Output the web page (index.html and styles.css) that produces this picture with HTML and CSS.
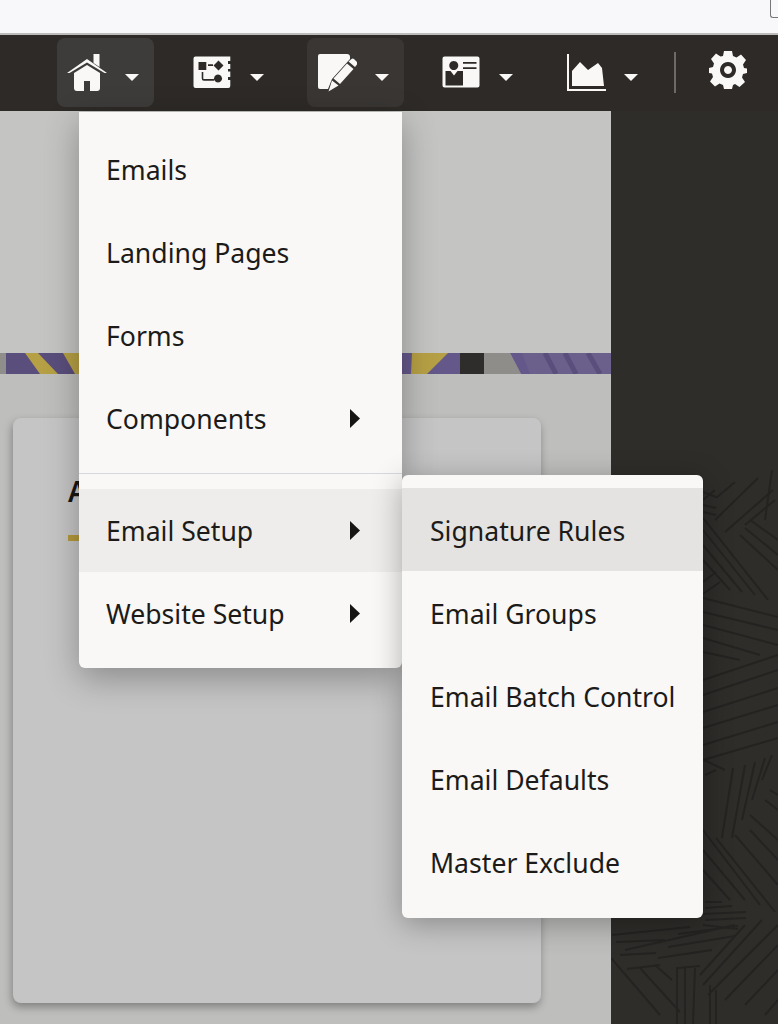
FILE: index.html
```html
<!DOCTYPE html>
<html lang="en">
<head>
  <meta charset="UTF-8" />
  <meta name="viewport" content="width=device-width, initial-scale=1.0"/>
  <title>Assets menu</title>
  <link rel="stylesheet" href="styles.css">
</head>
<body>
  <!-- Browser strip -->
  <div class="top-strip"><span class="strip-box"></span></div>

  <!-- Nav bar -->
  <nav class="navbar">
    <a class="nav-item active">
      <svg class="nav-icon" viewBox="0 0 40 40">
        <path d="M26.500 1h6v13l-6-4z" />
        <path d="M20 6 0 20h2.500L20 9.500 37.500 20H40z" />
        <path d="M20 12 7 20v15q0 3 3 3h7V28h6v10h7q3 0 3-3V20z" />
      </svg>
      <span class="caret"></span>
    </a>
    <a class="nav-item">
      <svg class="nav-icon" viewBox="0 0 40 40">
        <path fill-rule="evenodd" d="M3.500 3.500H38.300V8H36V11h2.300V16H36V18.500h2.300V24H36V27h2.300V33q0 2-2 2H3.500q-2 0-2-2V5.500q0-2 2-2zM6.500 9v8h7.800V9zM16 11.200v1.700h5v-1.700zM26.500 7.500l-5 5 5 5 5-5zM9.700 19v6.500q0 2.300 2.300 2.300H22v-1.700H12q-.7 0-.7-.7V19zM26 21.500a4 4 0 1 0 .01 0z" />
      </svg>
      <span class="caret"></span>
    </a>
    <a class="nav-item active dim">
      <svg class="nav-icon" viewBox="0 0 40 40">
        <path d="M3 1h27q3 0 3 3v2L15 26l-4 10H3q-2 0-2-2V3q0-2 2-2z" />
        <path d="M31.500 8.500 38 14l2-2.500q1-1.500 0-2.500l-3-3q-1.500-1-2.500 0zM30 10.500 16.500 25.500l6.500 5.500L36.500 16zM15 27.500l-3.500 11 10-6z" />
      </svg>
      <span class="caret"></span>
    </a>
    <a class="nav-item">
      <svg class="nav-icon" viewBox="0 0 40 40">
        <path fill-rule="evenodd" d="M3.500 3.500h33q2 0 2 2V32.500q0 2-2 2h-33q-2 0-2-2V5.500q0-2 2-2zM12.750 8a4.500 4.500 0 1 0 .01 0zM22 9v1.800h13.500V9zM22 14.300v1.800h13.500v-1.800zM4.500 18V32.500H22V18h-5.500l-3.500 4.500L9.500 18z" />
      </svg>
      <span class="caret"></span>
    </a>
    <a class="nav-item">
      <svg class="nav-icon" viewBox="0 0 40 40">
        <path d="M1 1h2v35h37v2H1z" />
        <path d="M6 33V18l8-9 8 8 10-7 4 5 2 18z" />
      </svg>
      <span class="caret"></span>
    </a>
    <span class="nav-divider"></span>
    <svg class="gear" viewBox="0 0 38 38">
      <path fill-rule="evenodd" d="M15 0h8l1 5 3.500 1.500 4.500-3 5 5.500-3 4.500L35 17l3 .5V22l-4 1-1 3.500 3 4.500-5.500 5-4.500-3L24 34l-1 4h-8l-1-4-3.500-1.500-4.500 3-5-5 3-4.500L3 22.500 0 22v-5l4-1 1-3.500-3-4.500 5-5.500 4.500 3L14 5zM19 11a8 8 0 1 0 .01 0zM19 15a4 4 0 1 1-.01 0z" />
    </svg>
  </nav>

  <!-- Page behind the menu -->
  <div class="page">
    <main class="content">
      <div class="hero"></div>
      <svg class="stripe" viewBox="0 0 611 21" preserveAspectRatio="none">
        <rect width="460" height="21" fill="#5a4e7c" />
        <rect x="521" width="90" height="21" fill="#6b5f8b" />
        <rect x="402" width="58" height="21" fill="#64588a" />
        <rect width="6" height="21" fill="#8f8e8a" />
        <polygon points="25,0 38,0 58,21 40,21" fill="#b6a045" />
        <polygon points="63,0 80,0 80,21 75,21" fill="#b6a045" />
        <polygon points="411,21 412,0 448,0 427,21" fill="#b6a045" />
        <rect x="460" width="24" height="21" fill="#2e2d2c" />
        <polygon points="484,0 510,0 521,21 484,21" fill="#8e8d8a" />
        <polygon points="484,0 522,0 530,21 521,21 510,0" fill="#64588a" />
        <g stroke="#5a4e7c" stroke-width="5">
          <path d="M545 0 556 21M565 0 576 21M588 0 600 21" />
        </g>
      </svg>
      <section class="card">
        <h2>A</h2>
        <div class="accent"></div>
      </section>
    </main>
    <aside class="side">
      <svg class="side-pattern" viewBox="611 470 167 554">
        <g fill="none" stroke="#252321" stroke-width="2">
          <!-- top cluster -->
          <path d="M703 500 715 490M716 498 735 482M715 520 758 478M725 532 773 490M745 525 775 500M703 492 716 497M703 505 716 508M703 512 716 515" />
          <path d="M772 470 765 520M740 535 778 570M745 528 778 555M750 520 778 540" />
          <!-- down right -->
          <path d="M703 518 768 600M703 530 755 595M703 545 742 592M703 560 730 590" />
          <path d="M703 582 716 572M703 594 720 582" />
          <!-- fan -->
          <path d="M703 598 778 617M703 612 778 630M703 625 778 645M703 638 760 655M703 652 740 660" />
          <!-- up right shallow -->
          <path d="M703 680 778 655M703 695 778 670M703 712 778 688M703 728 778 705M703 745 778 722M703 760 778 738" />
          <!-- steep -->
          <path d="M722 838 733 768M732 838 745 765M742 820 755 762M752 800 765 758M762 780 772 755M705 775 716 770M704 760 725 770" />
          <path d="M765 800 778 810M750 815 778 840M770 790 778 795" />
          <!-- second down right -->
          <path d="M703 830 760 905M703 850 745 900M703 870 730 900M716 838 775 912M735 835 778 885M750 830 778 860" />
          <!-- horizontals -->
          <path d="M705 902 722 902M705 908 732 906M703 914 746 912M705 920 746 918M703 925 738 929M612 935 690 927M625 950 735 925M616 942 665 940M678 934 738 926M668 947 735 936M658 958 712 950M620 955 656 953" />
          <path d="M627 969 660 965M678 968 700 966" />
          <!-- down right lower -->
          <path d="M611 958 660 1015M640 968 680 1012M655 965 672 980" />
          <!-- verticals -->
          <path d="M677 967 677 1024M685 966 685 1024M695 968 693 1024M710 985 710 1024M716 990 716 1024" />
          <!-- up right lower -->
          <path d="M703 985 762 920M708 995 778 925M725 1000 778 945M745 1005 778 970M765 1015 778 1000M700 975 745 925" />
        </g>
      </svg>
    </aside>
  </div>

  <!-- Dropdown -->
  <ul class="menu">
    <li class="menu-item">Emails</li>
    <li class="menu-item">Landing Pages</li>
    <li class="menu-item">Forms</li>
    <li class="menu-item">Components<span class="arrow"></span></li>
    <li class="menu-sep"></li>
    <li class="menu-item has-sub open">Email Setup<span class="arrow"></span>
      <ul class="menu submenu">
        <li class="menu-item current">Signature Rules</li>
        <li class="menu-item">Email Groups</li>
        <li class="menu-item">Email Batch Control</li>
        <li class="menu-item">Email Defaults</li>
        <li class="menu-item">Master Exclude</li>
      </ul>
    </li>
    <li class="menu-item">Website Setup<span class="arrow"></span></li>
  </ul>
</body>
</html>
```

FILE: styles.css
```css
* {
  box-sizing: border-box;
}

body {
  margin: 0;
  padding: 0;
  height: 1024px;
  overflow: hidden;
  font-family: "Noto Sans", sans-serif;
  color: #1c1b19;
  background: #2f2d2a;
  position: relative;
}

.top-strip {
  height: 35px;
  background: #f8f8fa;
  border-bottom: 2px solid #bdbcba;
  display: flex;
  justify-content: flex-end;
}

.strip-box {
  width: 8px;
  height: 18px;
  border-left: 1px solid #77777a;
  border-bottom: 1px solid #77777a;
  border-bottom-left-radius: 3px;
}

.navbar {
  height: 76px;
  background: #2d2a27;
  display: flex;
  align-items: flex-start;
  gap: 27.75px;
  padding: 3px 0 0 57px;
}

.nav-item {
  width: 97px;
  height: 69px;
  border-radius: 8px;
  display: flex;
  align-items: center;
  padding-left: 10px;
}

.nav-item.active {
  background: #3e3c3a;
}

.nav-item.dim {
  background: #393634;
}

.nav-icon {
  width: 40px;
  height: 40px;
  fill: #f9f8f6;
  flex: none;
}

.caret {
  width: 0;
  height: 0;
  margin: 9px 0 0 18px;
  border-left: 7px solid transparent;
  border-right: 7px solid transparent;
  border-top: 7px solid #f9f8f6;
}

.nav-divider {
  width: 2px;
  height: 41px;
  margin: 14px 0 0 -7px;
  background: #6d6b68;
}

.gear {
  width: 38px;
  height: 38px;
  margin: 13px 0 0 5.5px;
  fill: #f9f8f6;
}

.page {
  display: flex;
  height: 913px;
}

.content {
  width: 611px;
  flex: none;
  background: #bebebc;
}

.hero {
  height: 242px;
  background: #c4c4c3;
}

.stripe {
  display: block;
  width: 611px;
  height: 21px;
}

.card {
  width: 528px;
  height: 585px;
  margin: 44px 0 0 13px;
  padding: 54px 0 0 55px;
  background: #c5c5c5;
  border-radius: 8px;
  box-shadow: -1px 4px 8px rgba(0, 0, 0, 0.32);
}

.card h2 {
  margin: 0;
  font-size: 28px;
  line-height: 38px;
  font-weight: 600;
  color: #161513;
}

.accent {
  width: 60px;
  height: 6px;
  margin-top: 25px;
  background: #b49a3c;
}

.side {
  flex: 1;
  display: flex;
  flex-direction: column;
  justify-content: flex-end;
  background: #2f2d2a;
}

.side-pattern {
  display: block;
  width: 167px;
  height: 554px;
}

.menu {
  list-style: none;
  margin: 0;
  position: absolute;
  top: 112px;
  left: 79px;
  width: 323px;
  padding: 16px 0 13px;
  background: #f9f8f6;
  border-radius: 0 0 6px 6px;
  box-shadow: 0 10px 34px rgba(0, 0, 0, 0.3);
}

.menu-item {
  height: 83px;
  padding: 0 42px 0 27px;
  display: flex;
  align-items: center;
  justify-content: space-between;
  font-size: 26.6px;
  line-height: 36px;
  white-space: nowrap;
}

.menu-sep {
  height: 1px;
  margin: 13px 0 15px;
  background: #d5d9dd;
}

.has-sub {
  position: relative;
}

.open {
  background: #eeedeb;
}

.submenu {
  top: -14px;
  left: 100%;
  width: 301px;
  padding: 13px 0 15px;
  border-radius: 6px;
  box-shadow: 0 6px 30px rgba(0, 0, 0, 0.3);
  z-index: 2;
}

.submenu .menu-item {
  padding: 2px 28px 0;
}

.current {
  background: #e4e3e1;
}

.arrow {
  width: 10px;
  height: 19px;
  background: #161513;
  clip-path: polygon(0 0, 100% 50%, 0 100%);
}
```
